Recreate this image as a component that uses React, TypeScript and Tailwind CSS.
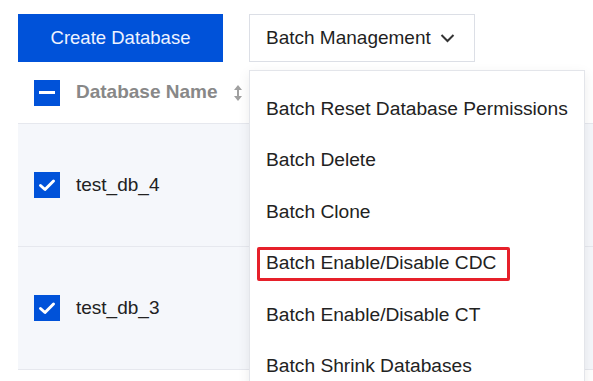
const menuItems = [
  "Batch Reset Database Permissions",
  "Batch Delete",
  "Batch Clone",
  "Batch Enable/Disable CDC",
  "Batch Enable/Disable CT",
  "Batch Shrink Databases",
];

const rows = ["test_db_4", "test_db_3"];

const CheckBox = ({ partial }: { partial?: boolean }) => (
  <div className="w-[26px] h-[26px] bg-[#0052d9] flex items-center justify-center shrink-0">
    {partial ? (
      <div className="w-[16px] h-[3px] bg-white" />
    ) : (
      <svg width="18" height="14" viewBox="0 0 18 14" fill="none">
        <path d="M2.5 7.5 L7 11.5 L15.5 3" stroke="white" strokeWidth="3" strokeLinecap="round" strokeLinejoin="round" />
      </svg>
    )}
  </div>
);

export default function App() {
  return (
    <div className="w-[593px] h-[381px] overflow-hidden bg-white font-['Liberation_Sans',Arial,sans-serif] text-[19px] relative">
      <div className="pl-[18px] pt-[14px]">
        {/* toolbar */}
        <div className="flex gap-[26px]">
          <button className="w-[205px] h-[48px] bg-[#0052d9] text-[#eef3ff] text-[18.5px]">Create Database</button>
          <button className="w-[226px] h-[48px] border border-[#dcdfe6] text-[#1f1f1f] flex items-center pl-[16px] gap-[9px]">
            Batch Management
            <svg width="15" height="10" viewBox="0 0 15 10" fill="none">
              <path d="M1.5 2 L7.5 8 L13.5 2" stroke="#333" strokeWidth="2" />
            </svg>
          </button>
        </div>

        {/* table */}
        <div>
          <div className="h-[62px] border-b border-[#e6e8ee] flex items-center pl-[16px] gap-[16px]">
            <CheckBox partial />
            <span className="font-bold text-[#888888]">Database Name</span>
            <svg width="10" height="20" viewBox="0 0 10 20" className="ml-[-1px]">
              <path d="M5 2 L9 7 H1 Z M5 18 L9 13 H1 Z" fill="#a0a0a0" />
              <rect x="4" y="6" width="2" height="8" fill="#a0a0a0" />
            </svg>
          </div>
          {rows.map((r) => (
            <div key={r} className="h-[123px] bg-[#f5f7fb] border-b border-[#e6e8ee] flex items-center pl-[16px] gap-[16px]">
              <CheckBox />
              <span className="text-[#222222]">{r}</span>
            </div>
          ))}
        </div>
      </div>

      {/* dropdown */}
      <div className="absolute left-[249px] top-[70px] w-[336px] h-[330px] bg-white border border-[#e3e5ea] shadow-[0_4px_12px_rgba(0,0,0,0.08)] pt-[12.5px]">
        {menuItems.map((m) => (
          <div key={m} className="relative h-[51.5px] flex items-center pl-[16px] text-[#222222] text-[19.2px]">
            {m}
            {m === "Batch Enable/Disable CDC" && (
              <div className="absolute left-[7px] top-[8.5px] w-[253px] h-[34px] border-[3px] border-[#e6202a] rounded-[2px]" />
            )}
          </div>
        ))}
      </div>
    </div>
  );
}
